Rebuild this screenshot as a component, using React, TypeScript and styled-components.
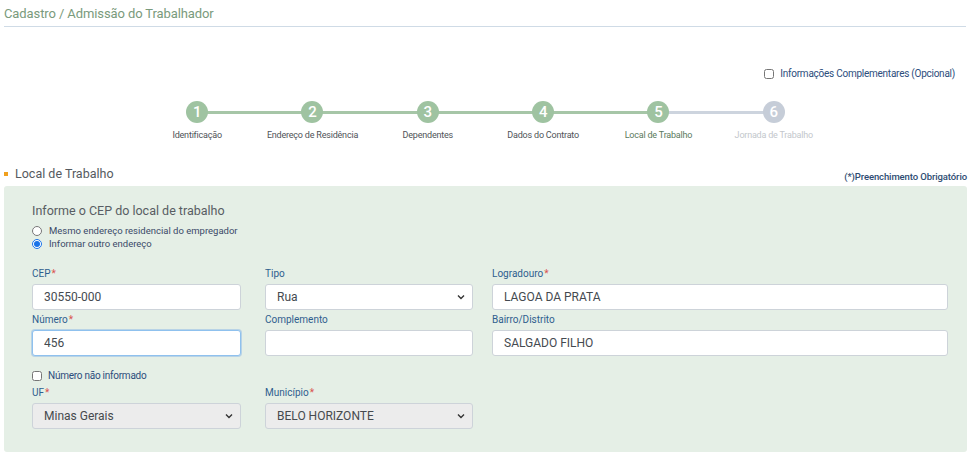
import React from 'react';
import styled, { createGlobalStyle, css } from 'styled-components';

const GlobalStyle = createGlobalStyle`
    html, body {
        margin: 0;
        padding: 0;
        background: #ffffff;
        font-family: Roboto, "Liberation Sans", Arial, sans-serif;
    }
    * {
        box-sizing: border-box;
    }
`;

const Page = styled.div`
    padding: 0 8px 0 4px;
`;

const PageHeader = styled.header`
    padding: 5px 0 3px;
    border-bottom: 1px solid #cfdbe6;
    margin-right: 1px;
`;

const PageTitle = styled.h1`
    margin: 0;
    font-size: 13px;
    letter-spacing: -0.1px;
    line-height: 18px;
    font-weight: 400;
    color: #7a9a7c;
`;

const OptionsRow = styled.div`
    display: flex;
    justify-content: flex-end;
    padding-right: 12px;
    margin-top: 40px;
`;

const CheckLabel = styled.label<{ $size?: number }>`
    display: inline-flex;
    align-items: center;
    gap: 6px;
    font-size: ${(p) => p.$size ?? 10}px;
    letter-spacing: -0.25px;
    line-height: 13px;
    color: #2c4d7c;
    cursor: pointer;

    input {
        margin: 0;
        width: 10px;
        height: 10px;
    }
`;

const Stepper = styled.ol`
    list-style: none;
    display: flex;
    width: 692px;
    margin: 21px auto 0;
    padding: 0;
`;

type StepState = 'done' | 'active' | 'todo';

const Step = styled.li<{ $state: StepState; $first?: boolean }>`
    position: relative;
    flex: 1;
    display: flex;
    flex-direction: column;
    align-items: center;
    gap: 6px;

    ${(p) =>
        !p.$first &&
        css`
            &::before {
                content: '';
                position: absolute;
                top: 10px;
                left: -50%;
                right: 50%;
                height: 3px;
                background: ${p.$state === 'todo' ? '#cdd4de' : '#a6c6a7'};
            }
        `}
`;

const StepCircle = styled.span<{ $state: StepState }>`
    position: relative;
    z-index: 1;
    width: 22px;
    height: 22px;
    border-radius: 50%;
    background: ${(p) => (p.$state === 'todo' ? '#c6cdd8' : '#9fc3a1')};
    color: #ffffff;
    font-size: 15px;
    font-weight: 500;
    display: flex;
    align-items: center;
    justify-content: center;
`;

const StepLabel = styled.span<{ $state: StepState }>`
    font-size: 9px;
    letter-spacing: -0.2px;
    line-height: 12px;
    color: ${(p) =>
        p.$state === 'active' ? '#5b7a5d' : p.$state === 'todo' ? '#c3c7cc' : '#4f5357'};
`;

const SectionHeader = styled.div`
    display: flex;
    justify-content: space-between;
    align-items: flex-end;
    margin-top: 25px;
`;

const SectionTitle = styled.h2`
    margin: 0;
    display: flex;
    align-items: center;
    gap: 7px;
    font-size: 12.5px;
    line-height: 16px;
    font-weight: 400;
    color: #555a60;

    &::before {
        content: '';
        width: 4px;
        height: 4px;
        background: #f0a01e;
    }
`;

const RequiredNote = styled.span`
    font-size: 9.5px;
    letter-spacing: -0.1px;
    line-height: 12px;
    font-weight: 500;
    color: #2e4c72;
    margin-bottom: -1px;
`;

const Panel = styled.section`
    margin-top: 4px;
    background: #e5efe6;
    border-radius: 3px;
    padding: 16px 19px 23px 28px;
`;

const PanelTitle = styled.h3`
    margin: 0 0 4px;
    font-size: 12.5px;
    line-height: 18px;
    font-weight: 400;
    color: #585d63;
`;

const RadioGroup = styled.div`
    display: flex;
    flex-direction: column;
    margin-bottom: 17px;
`;

const RadioLabel = styled.label`
    display: flex;
    align-items: center;
    gap: 7px;
    font-size: 9.5px;
    line-height: 13px;
    color: #3b4a68;

    input {
        margin: 0;
        width: 10px;
        height: 10px;
        accent-color: #1a73e8;
    }
`;

const FieldGrid = styled.div`
    display: grid;
    grid-template-columns: 233px 227px 1fr;
    row-gap: 3px;
`;

const Field = styled.div<{ $width?: number }>`
    display: flex;
    flex-direction: column;
    width: ${(p) => (p.$width ? `${p.$width}px` : 'auto')};
`;

const FieldLabel = styled.label`
    font-size: 10px;
    line-height: 14px;
    margin-bottom: 3px;
    color: #2f5e8e;

    b {
        font-weight: 400;
        color: #d9534f;
        margin-left: 1px;
    }
`;

const controlBase = css`
    height: 26px;
    width: 100%;
    border: 1px solid #cdd3d9;
    border-radius: 3px;
    padding: 0 11px;
    font-family: Roboto, "Liberation Sans", Arial, sans-serif;
    font-size: 12px;
    color: #444a50;
    background: #ffffff;
    outline: none;
`;

const TextInput = styled.input<{ $focused?: boolean }>`
    ${controlBase}
    ${(p) =>
        p.$focused &&
        css`
            border-color: #8fc1ee;
            box-shadow: 0 0 0 1px rgba(100, 160, 230, 0.35);
        `}
`;

const SelectWrap = styled.div`
    position: relative;

    svg {
        position: absolute;
        right: 8px;
        top: 10px;
        pointer-events: none;
    }
`;

const Select = styled.select`
    ${controlBase}
    appearance: none;

    &:disabled {
        background: #ececec;
        color: #464a4e;
        opacity: 1;
    }
`;

const CheckRow = styled.div`
    grid-column: 1 / -1;
    display: flex;
    line-height: 13px;
    margin: 10px 0 1px;
`;

const Chevron = () => (
    <svg width="8" height="6" viewBox="0 0 8 6" fill="none">
        <path d="M1 1.5 4 4.5 7 1.5" stroke="#333" strokeWidth="1.4" />
    </svg>
);

const steps: { label: string; state: StepState }[] = [
    { label: 'Identificação', state: 'done' },
    { label: 'Endereço de Residência', state: 'done' },
    { label: 'Dependentes', state: 'done' },
    { label: 'Dados do Contrato', state: 'done' },
    { label: 'Local de Trabalho', state: 'active' },
    { label: 'Jornada de Trabalho', state: 'todo' },
];

export default function App() {
    return (
        <>
            <GlobalStyle />
            <Page>
                <PageHeader>
                    <PageTitle>Cadastro / Admissão do Trabalhador</PageTitle>
                </PageHeader>

                <OptionsRow>
                    <CheckLabel>
                        <input type="checkbox" />
                        Informações Complementares (Opcional)
                    </CheckLabel>
                </OptionsRow>

                <Stepper>
                    {steps.map((s, i) => (
                        <Step key={s.label} $state={s.state} $first={i === 0}>
                            <StepCircle $state={s.state}>{i + 1}</StepCircle>
                            <StepLabel $state={s.state}>{s.label}</StepLabel>
                        </Step>
                    ))}
                </Stepper>

                <SectionHeader>
                    <SectionTitle>Local de Trabalho</SectionTitle>
                    <RequiredNote>(*)Preenchimento Obrigatório</RequiredNote>
                </SectionHeader>

                <Panel>
                    <PanelTitle>Informe o CEP do local de trabalho</PanelTitle>
                    <RadioGroup>
                        <RadioLabel>
                            <input type="radio" name="endereco" />
                            Mesmo endereço residencial do empregador
                        </RadioLabel>
                        <RadioLabel>
                            <input type="radio" name="endereco" defaultChecked />
                            Informar outro endereço
                        </RadioLabel>
                    </RadioGroup>

                    <FieldGrid>
                        <Field $width={209}>
                            <FieldLabel>
                                CEP<b>*</b>
                            </FieldLabel>
                            <TextInput defaultValue="30550-000" />
                        </Field>
                        <Field $width={208}>
                            <FieldLabel>Tipo</FieldLabel>
                            <SelectWrap>
                                <Select defaultValue="Rua">
                                    <option>Rua</option>
                                    <option>Avenida</option>
                                </Select>
                                <Chevron />
                            </SelectWrap>
                        </Field>
                        <Field>
                            <FieldLabel>
                                Logradouro<b>*</b>
                            </FieldLabel>
                            <TextInput defaultValue="LAGOA DA PRATA" />
                        </Field>

                        <Field $width={209}>
                            <FieldLabel>
                                Número<b>*</b>
                            </FieldLabel>
                            <TextInput defaultValue="456" $focused />
                        </Field>
                        <Field $width={208}>
                            <FieldLabel>Complemento</FieldLabel>
                            <TextInput />
                        </Field>
                        <Field>
                            <FieldLabel>Bairro/Distrito</FieldLabel>
                            <TextInput defaultValue="SALGADO FILHO" />
                        </Field>

                        <CheckRow>
                            <CheckLabel $size={10}>
                                <input type="checkbox" />
                                Número não informado
                            </CheckLabel>
                        </CheckRow>

                        <Field $width={209}>
                            <FieldLabel>
                                UF<b>*</b>
                            </FieldLabel>
                            <SelectWrap>
                                <Select disabled defaultValue="Minas Gerais">
                                    <option>Minas Gerais</option>
                                </Select>
                                <Chevron />
                            </SelectWrap>
                        </Field>
                        <Field $width={208}>
                            <FieldLabel>
                                Município<b>*</b>
                            </FieldLabel>
                            <SelectWrap>
                                <Select disabled defaultValue="BELO HORIZONTE">
                                    <option>BELO HORIZONTE</option>
                                </Select>
                                <Chevron />
                            </SelectWrap>
                        </Field>
                    </FieldGrid>
                </Panel>
            </Page>
        </>
    );
}
